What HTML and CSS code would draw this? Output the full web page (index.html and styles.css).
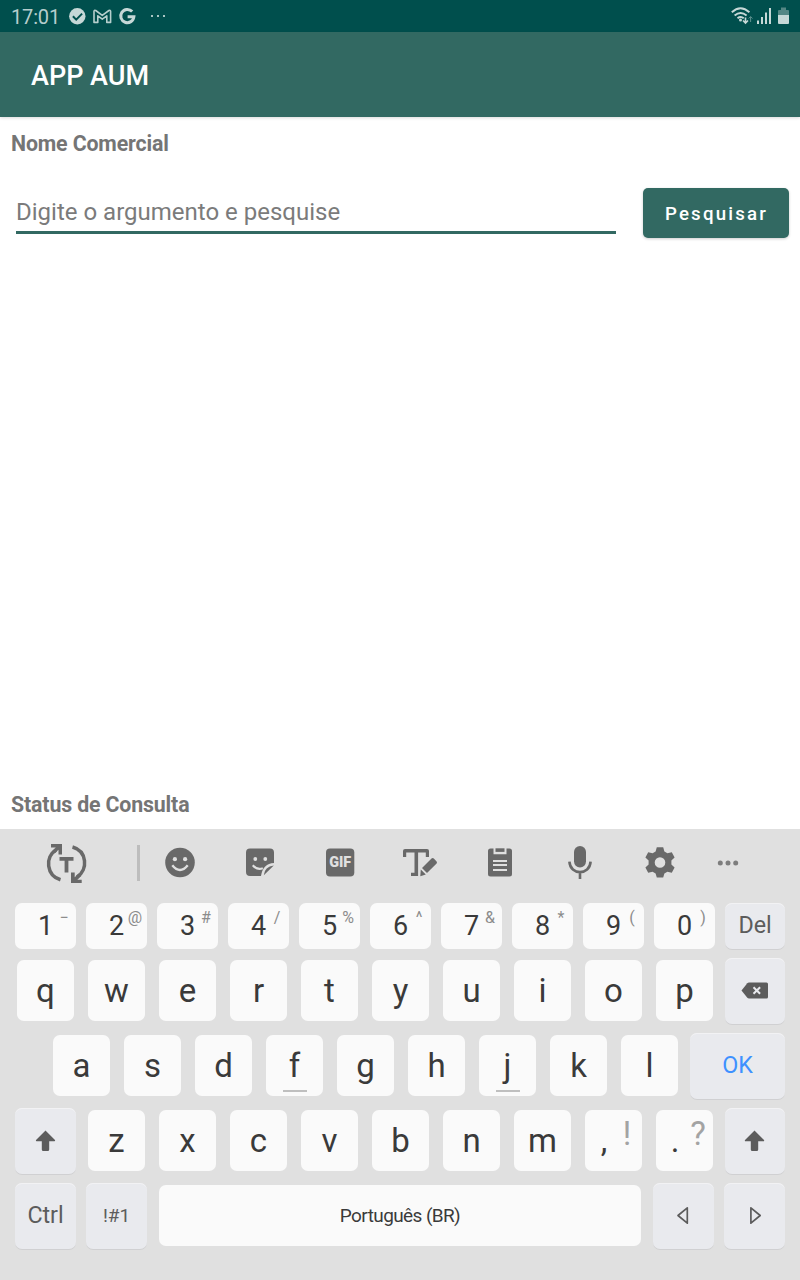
FILE: index.html
```html
<!DOCTYPE html>
<html lang="pt-BR">
<head>
<meta charset="utf-8">
<title>APP AUM</title>
<link rel="stylesheet" href="styles.css">
</head>
<body>
<div class="screen">
  <div class="status">
    <span class="clock">17:01</span>
    <svg class="notifs" width="102" height="32" viewBox="66 0 102 32">
      <circle cx="77.3" cy="16.3" r="8.2" fill="#c6d8d7"/>
      <path d="M72.9 16.3l3.3 3.3 5.9-6" fill="none" stroke="#004f4d" stroke-width="2"/>
      <path d="M94 22.400V11.300q0-1.500 1.700-.8l6.600 4.900 6.600-4.900q1.700-.7 1.700.8v11.100h-3.800v-6.600l-4.500 3.300-4.500-3.300v6.600z" fill="none" stroke="#b6cfcd" stroke-width="1.600" stroke-linejoin="round"/>
      <path d="M132.200 11.600a6.600 6.600 0 1 0 1.700 5.100h-6.300" fill="none" stroke="#c6d8d7" stroke-width="3"/>
      <path d="M151 15h2v2h-2zM157 15h2v2h-2zM163 15h2v2h-2z" fill="#a9c6c4"/>
    </svg>
    <svg class="signals" width="62" height="32" viewBox="730 0 62 32">
      <g fill="none" stroke="#c6d8d7" stroke-width="1.900">
        <path d="M731.800 12.200q8.700-8 17.600 0M734.600 15.400q6-5 12 0M737.500 18.300q3.200-2.500 6.200 0"/>
        <path d="M745.500 17.500v5M743 20.500l2.500 2.600 2.500-2.600" stroke-width="1.600"/>
        <path d="M750.600 22v-5M748.700 18.500l1.900-2 1.900 2" stroke="#5e9290" stroke-width="1"/>
      </g>
      <circle cx="740.500" cy="20" r="1.500" fill="#c6d8d7"/>
      <path d="M757 20.500h2V24h-2zM761 17h2v7h-2zM765 12.500h2V24h-2zM769 8h2v16h-2z" fill="#c6d8d7"/>
      <path d="M778 15v-4q0-1 1-1h2V7.500h5V10h2q1 0 1 1v4z" fill="#548785"/>
      <path d="M778 15h11v8q0 1-1 1h-9q-1 0-1-1z" fill="#c6d8d7"/>
    </svg>
  </div>
  <header class="appbar">APP AUM</header>
  <main class="content">
    <div class="label">Nome Comercial</div>
    <div class="search">
      <div class="field">Digite o argumento e pesquise</div>
      <div class="button">Pesquisar</div>
    </div>
    <div class="label bottom">Status de Consulta</div>
  </main>
  <section class="keyboard">
    <svg class="tools" width="800" height="74" viewBox="0 829 800 74" fill="#696969">
      <g fill="none" stroke="#696969" stroke-width="3.500">
        <path d="M60.500 879.700C46.500 875.500 44.500 857 56 850M72.500 847C87 851 88.500 869.500 77 877"/>
      </g>
      <path d="M51 844h11v10.500h-3.500v-4.700l-3.600 3.500-2.600-2.500 3.500-3.300H51zM71 872.500h3.700v4.800l4-3.900 2.600 2.500-4 3.800h4.400v3.300H71z"/>
      <path d="M59.500 857h14v3.700h-5.100v11.700h-3.800v-11.700h-5.100z"/>
      <path d="M137 845h3v36h-3z" fill="#bdbdbd"/>
      <circle cx="180" cy="862.500" r="14.800"/>
      <g fill="#e0e0e0"><circle cx="174.900" cy="859.200" r="2.100"/><circle cx="185.100" cy="859.200" r="2.100"/></g>
      <path d="M172.300 865.300q7.700 9.500 15.400 0" fill="none" stroke="#e0e0e0" stroke-width="2.400"/>
      <path d="M250 848.500h20q4 0 4 4v10.600q-11 .5-13 13H250q-4 0-4-4v-19.600q0-4 4-4z"/>
      <path d="M263.800 875.300q.8-8.700 10-9.700z"/>
      <g fill="#e0e0e0"><circle cx="255.300" cy="859" r="1.900"/><circle cx="265.300" cy="859" r="1.900"/></g>
      <path d="M252.800 865.200q4.200 5 10 3" fill="none" stroke="#e0e0e0" stroke-width="2.200"/>
      <rect x="326" y="848.500" width="28.300" height="28" rx="4"/>
      <text class="gif" x="340.200" y="867.400" text-anchor="middle" textLength="22" lengthAdjust="spacingAndGlyphs" fill="#e0e0e0">GIF</text>
      <path d="M405 849h22q2 0 2 2v6h-3.200v-4.400h-7.700V876H411v-3.200h3.500v-20.200h-8.300v4.400H403v-6q0-2 2-2z"/>
      <path d="M431.500 858.500q1.200-1 2.300 0l2.800 3q.8 1 0 2L427 873l-5-5zM420.800 869.600l5 4.800-5.500 1.900z"/>
      <path d="M490.500 848.500h3v5.700h13v-5.700h3q2.500 0 2.500 2.500v23q0 2.500-2.500 2.500h-19q-2.500 0-2.500-2.500v-23q0-2.500 2.500-2.500z"/>
      <path d="M495.500 848.300h9v3.600h-9z"/>
      <path d="M493 861h14M493 865h14M493 870h14" stroke="#e0e0e0" stroke-width="2"/>
      <rect x="574" y="846" width="12" height="21.500" rx="6"/>
      <path d="M569.400 861.600c.8 14 20.400 14 21.200 0M580 872v7" fill="none" stroke="#696969" stroke-width="2.600"/>
      <path fill-rule="evenodd" d="M656.800 847.200h6.400l1.200 4.400 3 1.700 4.400-1 2.800 5.200-3.200 3v4l3.200 3-2.800 5.200-4.400-1-3 1.700-1.200 4.200h-6.400l-1.200-4.200-3-1.700-4.400 1-2.800-5.200 3.200-3v-4l-3.200-3 2.800-5.200 4.400 1 3-1.700zM665.300 862.500a5.300 5.300 0 1 0-10.600 0 5.300 5.300 0 1 0 10.600 0z"/>
      <g fill="#7d7d7d"><circle cx="720.300" cy="862.900" r="2.500"/><circle cx="728" cy="862.900" r="2.500"/><circle cx="735.700" cy="862.900" r="2.500"/></g>
    </svg>
    <div class="row numbers">
      <div class="key">1<i class="hint">−</i></div><div class="key">2<i class="hint">@</i></div><div class="key">3<i class="hint">#</i></div><div class="key">4<i class="hint">/</i></div><div class="key">5<i class="hint">%</i></div><div class="key">6<i class="hint">^</i></div><div class="key">7<i class="hint">&amp;</i></div><div class="key">8<i class="hint">*</i></div><div class="key">9<i class="hint">(</i></div><div class="key">0<i class="hint">)</i></div>
      <div class="fn edge">Del</div>
    </div>
    <div class="row">
      <div class="key">q</div><div class="key">w</div><div class="key">e</div><div class="key">r</div><div class="key">t</div><div class="key">y</div><div class="key">u</div><div class="key">i</div><div class="key">o</div><div class="key">p</div>
      <div class="fn edge"><svg width="60" height="66" viewBox="725 958 60 66"><path d="M749 982.500h17.500q1.500 0 1.500 1.500v13q0 1.500-1.500 1.500H749q-1 0-1.700-.8l-5.800-7.200 5.800-7.200q.7-.8 1.700-.8z" fill="#5c5c5c"/><path d="M753.500 987.200l6.600 6.600M760.100 987.200l-6.600 6.600" stroke="#e9eaee" stroke-width="2"/></svg></div>
    </div>
    <div class="row home">
      <div class="key">a</div><div class="key">s</div><div class="key">d</div><div class="key bump">f</div><div class="key">g</div><div class="key">h</div><div class="key bump">j</div><div class="key">k</div><div class="key">l</div>
      <div class="fn ok">OK</div>
    </div>
    <div class="row">
      <div class="fn"><svg width="61" height="66" viewBox="0 0 61 66"><path d="M30.500 22.500l9.500 9.600q.6 1.200-.8 1.200h-5v8.200q0 1.500-1.500 1.500h-4.400q-1.500 0-1.500-1.500v-8.200h-5q-1.400 0-.8-1.200z" fill="#5c5c5c"/></svg></div>
      <div class="key">z</div><div class="key">x</div><div class="key">c</div><div class="key">v</div><div class="key">b</div><div class="key">n</div><div class="key">m</div><div class="key punct">,<i class="hint">!</i></div><div class="key punct">.<i class="hint">?</i></div>
      <div class="fn edge"><svg width="60" height="66" viewBox="1 0 60 66"><path d="M30.500 22.500l9.500 9.600q.6 1.200-.8 1.200h-5v8.200q0 1.500-1.500 1.500h-4.400q-1.500 0-1.500-1.500v-8.200h-5q-1.400 0-.8-1.200z" fill="#5c5c5c"/></svg></div>
    </div>
    <div class="row">
      <div class="fn">Ctrl</div><div class="fn sym">!#1</div>
      <div class="key space">Português (BR)</div>
      <div class="fn"><svg width="61" height="66" viewBox="653 1183 61 66"><path d="M687.300 1207.800v15.400l-9.300-7.700z" fill="none" stroke="#5c5c5c" stroke-width="1.700" stroke-linejoin="round"/></svg></div>
      <div class="fn"><svg width="61" height="66" viewBox="724 1183 61 66"><path d="M750.900 1207.800v15.400l9.300-7.700z" fill="none" stroke="#5c5c5c" stroke-width="1.700" stroke-linejoin="round"/></svg></div>
    </div>
  </section>
</div>
</body>
</html>
```
FILE: styles.css
```css
* { box-sizing: border-box; }
body { margin: 0; font-family: Roboto, "Liberation Sans", sans-serif; background: #fff; }
svg { display: block; }
.screen { width: 800px; height: 1280px; display: flex; flex-direction: column; overflow: hidden; }
.status { height: 32px; flex: none; background: #004f4d; display: flex; align-items: center; padding: 0 8px 0 11px; color: #b5cdcc; }
.clock { width: 55px; font-size: 20px; line-height: 32px; padding-top: 2px; letter-spacing: -.15px; white-space: nowrap; }
.signals { margin-left: auto; }
.appbar { height: 85px; flex: none; background: #326962; color: #fff; font-size: 27px; font-weight: 500; line-height: 88px; padding-left: 31px; box-shadow: 0 1px 3px rgba(0,0,0,.15); }
.content { flex: 1; display: flex; flex-direction: column; padding: 14px 11px 11px; }
.label { font-size: 21.33px; font-weight: 700; line-height: 26px; letter-spacing: -.15px; color: #757575; }
.bottom { margin-top: auto; }
.search { display: flex; justify-content: space-between; margin-top: 31px; }
.field { width: 600px; height: 46px; margin-left: 5px; border-bottom: 3px solid #326962; font-size: 24px; line-height: 48px; color: #7b7b7b; }
.button { width: 146px; height: 50px; border-radius: 5px; background: #326962; color: #fff; font-size: 18.67px; font-weight: 500; letter-spacing: 2.2px; line-height: 52px; padding-left: 1px; text-align: center; box-shadow: 0 1px 3px rgba(0,0,0,.2); }
.keyboard { height: 451px; flex: none; background: #e0e0e0; }
.gif { font-size: 14px; font-weight: 900; }
.row { display: flex; gap: 10px; height: 66px; margin: 0 15px 9px; }
.numbers { height: 46px; }
.home { margin-left: 51px; }
.key { width: 57px; height: 61px; margin: 2px; flex: none; position: relative; border-radius: 7px; background: #fafafa; color: #3a3a3a; font-size: 33px; line-height: 62px; text-align: center; }
.numbers .key { width: 61px; height: 46px; margin: 0; font-size: 27px; line-height: 46px; }
.hint { position: absolute; right: 5px; top: 5px; width: 14px; font-size: 16px; font-style: normal; line-height: 19px; color: #8c8c8c; display: flex; justify-content: center; }
.punct { padding-right: 19px; }
.punct .hint { right: 7px; top: 5px; width: 16px; font-size: 33px; line-height: 38px; color: #a3a3a3; }
.fn { width: 61px; flex: none; border-radius: 7px; background: #e9eaee; color: #5c5c5c; font-size: 23.3px; line-height: 65px; letter-spacing: -.1px; text-align: center; box-shadow: 0 1px 0 #d0d0d2, inset 0 1px 0 #f2f2f4; }
.edge { width: 60px; }
.numbers .fn { line-height: 45px; }
.ok { width: 95px; color: #3e91ff; }
.sym { font-size: 19px; }
.bump::after { content: ""; position: absolute; left: 16.500px; bottom: 4px; width: 24px; height: 2px; background: #bfbfbf; }
.key.space { width: 482px; font-size: 19px; letter-spacing: -.6px; }
```
